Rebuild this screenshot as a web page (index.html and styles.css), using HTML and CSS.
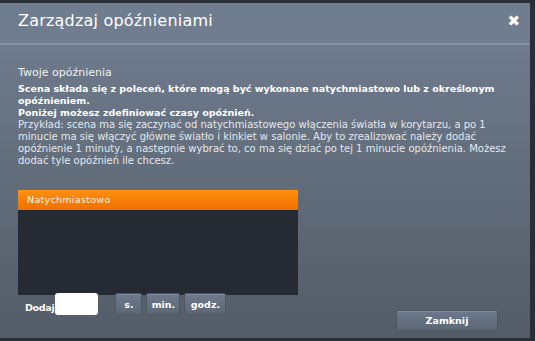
FILE: index.html
```html
<!DOCTYPE html>
<html lang="pl">
<head>
    <meta charset="UTF-8">
    <title>Zarządzaj opóźnieniami</title>
    <link rel="stylesheet" href="styles.css">
</head>
<body>
    <div class="dialog">
        <div class="header">
            <h1>Zarządzaj opóźnieniami</h1>
            <span class="close">&#x2716;</span>
        </div>
        <div class="content">
            <h2>Twoje opóźnienia</h2>
            <p class="info">
                <b>Scena składa się z poleceń, które mogą być wykonane natychmiastowo lub z określonym opóźnieniem.</b><br>
                <b>Poniżej możesz zdefiniować czasy opóźnień.</b><br>
                Przykład: scena ma się zaczynać od natychmiastowego włączenia światła w korytarzu, a po 1 minucie ma się włączyć główne światło i kinkiet w salonie. Aby to zrealizować należy dodać opóźnienie 1 minuty, a następnie wybrać to, co ma się dziać po tej 1 minucie opóźnienia. Możesz dodać tyle opóźnień ile chcesz.
            </p>
            <div class="list">
                <div class="item on">Natychmiastowo</div>
            </div>
            <div class="footer">
                <div class="add">
                    <label>Dodaj</label>
                    <input type="text" class="amount">
                    <button class="btn unit first">s.</button>
                    <button class="btn unit">min.</button>
                    <button class="btn unit">godz.</button>
                </div>
                <button class="btn close-btn">Zamknij</button>
            </div>
        </div>
    </div>
</body>
</html>
```

FILE: styles.css
```css
* {
    margin: 0;
    padding: 0;
    box-sizing: border-box;
}
body {
    background: #2a2f37;
    width: 535px;
    height: 341px;
    overflow: hidden;
    font-family: "DejaVu Sans", Verdana, sans-serif;
    padding-top: 3px;
}
.dialog {
    width: 530px;
    height: 335px;
    background: linear-gradient(#727f91, #535c67);
    display: flex;
    flex-direction: column;
}
.header {
    height: 42px;
    background: #707d8f;
    border-bottom: 2px solid #8390a1;
    display: flex;
    align-items: center;
    justify-content: space-between;
    padding: 0 10px 0 18px;
}
.header h1 {
    font-weight: normal;
    font-size: 16px;
    letter-spacing: 0.2px;
    color: #fff;
    margin-top: -5px;
}
.close {
    color: #fff;
    font-size: 15px;
    font-weight: bold;
    margin-top: -4px;
}
.content {
    padding: 21px 12px 0 18px;
    flex: 1;
    display: flex;
    flex-direction: column;
}
.content h2 {
    font-weight: normal;
    font-size: 11px;
    color: #eef1f4;
    margin-bottom: 4px;
}
.info {
    font-size: 10px;
    line-height: 12px;
    color: #e3e8ed;
    width: 500px;
}
.info b {
    color: #fff;
    font-size: 9.5px;
}
.list {
    margin-top: 23px;
    width: 280px;
    height: 105px;
    background: #262b33;
}
.item {
    height: 20px;
    line-height: 19px;
    padding-left: 9px;
    font-size: 9.5px;
    letter-spacing: 0.3px;
    color: #fff3e0;
}
.item.on {
    background: linear-gradient(#ff8f10, #f07000);
}
.footer {
    display: flex;
    justify-content: space-between;
    align-items: flex-start;
}
.add {
    display: flex;
    align-items: center;
    margin-top: -2px;
}
.add label {
    font-size: 9.5px;
    letter-spacing: -0.3px;
    font-weight: bold;
    color: #fff;
    margin: 6px 0 0 7px;
}
.amount {
    width: 43px;
    height: 22px;
    border: none;
    border-radius: 3px;
    background: #fff;
    margin-left: 1px;
}
.btn {
    font-family: "DejaVu Sans", Verdana, sans-serif;
    font-size: 9.5px;
    font-weight: bold;
    color: #fff;
    background: linear-gradient(#6d7a8b, #5c6776);
    border: 1px solid #4d5662;
    border-radius: 2px;
    box-shadow: inset 0 1px 0 #7f8b9b;
    height: 22px;
}
.unit {
    margin-left: 4px;
}
.unit.first {
    margin-left: 17px;
    width: 27px;
}
.unit:nth-child(4) {
    width: 34px;
}
.unit:nth-child(5) {
    width: 42px;
}
.close-btn {
    width: 102px;
    height: 21px;
    margin: 15px 20px 0 0;
}
```
